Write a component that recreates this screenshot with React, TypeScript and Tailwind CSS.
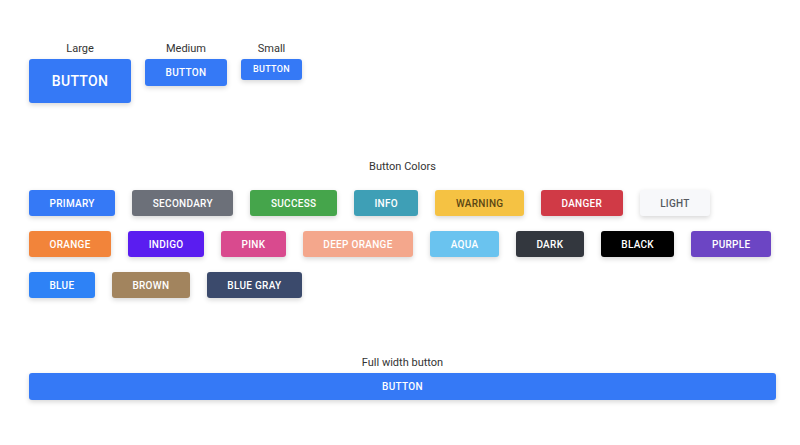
const font = { fontFamily: 'Roboto, "Noto Sans", sans-serif' }

type Swatch = { label: string; cls: string }

const colors: Swatch[] = [
  { label: 'PRIMARY', cls: 'bg-[#3579f6] text-white' },
  { label: 'SECONDARY', cls: 'bg-[#6c7079] text-white' },
  { label: 'SUCCESS', cls: 'bg-[#45a54b] text-white' },
  { label: 'INFO', cls: 'bg-[#3e9fb6] text-white' },
  { label: 'WARNING', cls: 'bg-[#f5c243] text-[#5a4614]' },
  { label: 'DANGER', cls: 'bg-[#d03a46] text-white' },
  { label: 'LIGHT', cls: 'bg-[#f7f8fa] text-[#55595f]' },
  { label: 'ORANGE', cls: 'bg-[#f2843a] text-white' },
  { label: 'INDIGO', cls: 'bg-[#5a1df0] text-white' },
  { label: 'PINK', cls: 'bg-[#d94a8e] text-white' },
  { label: 'DEEP ORANGE', cls: 'bg-[#f4a78c] text-white' },
  { label: 'AQUA', cls: 'bg-[#6ac3ef] text-white' },
  { label: 'DARK', cls: 'bg-[#33373e] text-white' },
  { label: 'BLACK', cls: 'bg-black text-white' },
  { label: 'PURPLE', cls: 'bg-[#6c45c4] text-white' },
  { label: 'BLUE', cls: 'bg-[#2e82f6] text-white' },
  { label: 'BROWN', cls: 'bg-[#a2845e] text-white' },
  { label: 'BLUE GRAY', cls: 'bg-[#3b4a6c] text-white' },
]

function Caption({ children }: { children: string }) {
  return <div className="text-[11px] leading-[13px] text-[#333]">{children}</div>
}

export default function App() {
  return (
    <div className="min-h-[445px] bg-white pl-[29px] pr-[24px] pt-[42px]" style={font}>
      {/* sizes */}
      <div className="flex items-start gap-[14px]">
        <div className="flex flex-col items-center gap-[4px]">
          <Caption>Large</Caption>
          <button className="flex h-[44px] w-[102px] items-center justify-center rounded-[3px] bg-[#3579f6] text-[14px] font-medium tracking-[0.3px] text-white shadow-[0_2px_5px_rgba(0,0,0,0.16)]">
            BUTTON
          </button>
        </div>
        <div className="flex flex-col items-center gap-[4px]">
          <Caption>Medium</Caption>
          <button className="flex h-[27px] w-[82px] items-center justify-center rounded-[3px] bg-[#3579f6] text-[10px] font-medium tracking-[0.3px] text-white shadow-[0_2px_5px_rgba(0,0,0,0.16)]">
            BUTTON
          </button>
        </div>
        <div className="flex flex-col items-center gap-[4px]">
          <Caption>Small</Caption>
          <button className="flex h-[21px] w-[61px] items-center justify-center rounded-[3px] bg-[#3579f6] text-[9px] font-medium tracking-[0.3px] text-white shadow-[0_2px_5px_rgba(0,0,0,0.16)]">
            BUTTON
          </button>
        </div>
      </div>

      {/* colours */}
      <div className="mt-[57px] flex justify-center">
        <Caption>Button Colors</Caption>
      </div>
      <div className="mt-[17px] flex flex-wrap gap-x-[17px] gap-y-[15px]">
        {colors.map((c) => (
          <button
            key={c.label}
            className={`flex h-[26px] items-center justify-center rounded-[3px] px-[20.5px] text-[10px] font-medium tracking-[0.3px] shadow-[0_2px_5px_rgba(0,0,0,0.16)] ${c.cls}`}
          >
            {c.label}
          </button>
        ))}
      </div>

      {/* full width */}
      <div className="mt-[58px] flex justify-center">
        <Caption>Full width button</Caption>
      </div>
      <button className="mt-[4px] flex h-[27px] w-full items-center justify-center rounded-[3px] bg-[#3579f6] text-[10px] font-medium tracking-[0.3px] text-white shadow-[0_2px_5px_rgba(0,0,0,0.16)]">
        BUTTON
      </button>
    </div>
  )
}
